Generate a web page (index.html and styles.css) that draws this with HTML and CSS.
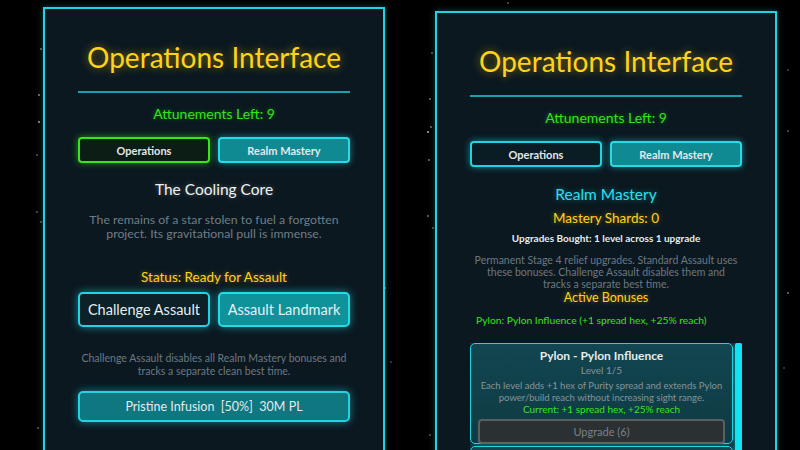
FILE: index.html
```html
<!DOCTYPE html>
<html lang="en">
<head>
    <meta charset="UTF-8">
    <meta name="viewport" content="width=device-width, initial-scale=1.0">
    <title>Operations Interface</title>
    <link rel="stylesheet" href="styles.css">
</head>
<body>
    <div class="stage">
        <!-- Operations tab -->
        <div class="panel panel-left">
            <h1 class="title">Operations Interface</h1>
            <hr class="divider">
            <p class="attune">Attunements Left: 9</p>
            <div class="tabs">
                <button class="tab tab-green">Operations</button>
                <button class="tab tab-teal">Realm Mastery</button>
            </div>
            <h2 class="zone-name">The Cooling Core</h2>
            <p class="desc">The remains of a star stolen to fuel a forgotten project. Its gravitational pull is immense.</p>
            <p class="status">Status: Ready for Assault</p>
            <div class="actions">
                <button class="big-btn big-btn-dark">Challenge Assault</button>
                <button class="big-btn big-btn-teal">Assault Landmark</button>
            </div>
            <p class="note">Challenge Assault disables all Realm Mastery bonuses and tracks a separate clean best time.</p>
            <button class="infuse-btn">Pristine Infusion&nbsp; [50%]&nbsp; 30M PL</button>
        </div>

        <!-- Realm Mastery tab -->
        <div class="panel panel-right">
            <h1 class="title">Operations Interface</h1>
            <hr class="divider">
            <p class="attune">Attunements Left: 9</p>
            <div class="tabs">
                <button class="tab tab-dark">Operations</button>
                <button class="tab tab-teal">Realm Mastery</button>
            </div>
            <h2 class="mastery-title">Realm Mastery</h2>
            <p class="shards">Mastery Shards: 0</p>
            <p class="bought">Upgrades Bought: 1 level across 1 upgrade</p>
            <p class="mastery-desc">Permanent Stage 4 relief upgrades. Standard Assault uses these bonuses. Challenge Assault disables them and tracks a separate best time.</p>
            <h3 class="bonus-head">Active Bonuses</h3>
            <p class="bonus-line">Pylon: Pylon Influence (+1 spread hex, +25% reach)</p>

            <div class="upgrade-wrap">
                <div class="upgrade-list">
                    <div class="upgrade-card">
                        <div class="card-title">Pylon - Pylon Influence</div>
                        <div class="card-level">Level 1/5</div>
                        <div class="card-desc">Each level adds +1 hex of Purity spread and extends Pylon power/build reach without increasing sight range.</div>
                        <div class="card-current">Current: +1 spread hex, +25% reach</div>
                        <button class="upgrade-btn">Upgrade (6)</button>
                    </div>
                    <div class="upgrade-card"></div>
                </div>
                <div class="scroll-thumb"></div>
            </div>
        </div>
    </div>
</body>
</html>
```

FILE: styles.css
```css
html, body {
    margin: 0;
    padding: 0;
    height: 100%;
    overflow: hidden;
}
body {
    font-family: Lato, "Noto Sans", sans-serif;
    background-color: #000;
    /* star field */
    background-image:
        radial-gradient(circle at 41px 49px, #555 0.8px, transparent 1.3px),
        radial-gradient(circle at 39px 95px, #666 0.8px, transparent 1.3px),
        radial-gradient(circle at 39px 122px, #777 0.8px, transparent 1.3px),
        radial-gradient(circle at 37px 155px, #444 0.7px, transparent 1.2px),
        radial-gradient(circle at 37px 212px, #444 0.7px, transparent 1.2px),
        radial-gradient(circle at 41px 222px, #444 0.7px, transparent 1.2px),
        radial-gradient(circle at 38px 428px, #444 0.7px, transparent 1.2px),
        radial-gradient(circle at 432px 53px, #444 0.7px, transparent 1.2px),
        radial-gradient(circle at 430px 99px, #555 0.8px, transparent 1.3px),
        radial-gradient(circle at 431px 127px, #555 0.8px, transparent 1.3px),
        radial-gradient(circle at 428px 132px, #888 0.8px, transparent 1.3px),
        radial-gradient(circle at 429px 160px, #555 0.8px, transparent 1.3px),
        radial-gradient(circle at 428px 216px, #555 0.8px, transparent 1.3px),
        radial-gradient(circle at 433px 228px, #444 0.7px, transparent 1.2px),
        radial-gradient(circle at 385px 288px, #555 0.8px, transparent 1.3px),
        radial-gradient(circle at 391px 362px, #333 0.7px, transparent 1.2px),
        radial-gradient(circle at 430px 435px, #444 0.7px, transparent 1.2px),
        radial-gradient(circle at 788px 70px, #333 0.7px, transparent 1.2px),
        radial-gradient(circle at 788px 131px, #444 0.7px, transparent 1.2px),
        radial-gradient(circle at 788px 293px, #555 0.8px, transparent 1.3px),
        radial-gradient(circle at 784px 368px, #333 0.7px, transparent 1.2px),
        radial-gradient(circle at 508px 3px, #444 0.7px, transparent 1.2px);
    background-repeat: no-repeat;
}
.stage {
    display: flex;
    align-items: flex-start;
    gap: 50px;
    padding-left: 43px;
}
.panel {
    width: 272px;
    padding: 31px 33px 0;
    background: #0b1820;
    border: 2px solid #22d3e2;
    box-shadow: 0 0 6px rgba(34, 211, 226, 0.35);
    text-align: center;
    height: 460px;
}
.panel-left {
    margin-top: 7px;
}
.panel-right {
    margin-top: 11px;
}
button {
    font-family: inherit;
    cursor: pointer;
}
p, h1, h2, h3 {
    margin: 0;
}
.title {
    font-size: 28px;
    font-weight: 400;
    line-height: 34px;
    color: #ffd21c;
    text-shadow: 0 0 8px rgba(255, 200, 0, 0.55);
}
.divider {
    border: none;
    height: 2px;
    background: #1a9fae;
    margin: 17px 0 0;
}
.attune {
    margin-top: 12px;
    font-size: 14px;
    line-height: 18px;
    color: #35e21b;
    text-shadow: 0 0 5px rgba(53, 226, 27, 0.45);
}
.tabs {
    display: flex;
    gap: 8px;
    margin-top: 14px;
}
.tab {
    flex: 1;
    height: 26px;
    border-radius: 4px;
    font-size: 11px;
    font-weight: 700;
    color: #e2e8ea;
    padding: 0;
}
.tab-green {
    background: #0b1d15;
    border: 2px solid #3be21e;
    box-shadow: 0 0 7px rgba(59, 226, 30, 0.6);
}
.tab-dark {
    background: #0a1c24;
    border: 2px solid #22d3e2;
    box-shadow: 0 0 7px rgba(34, 211, 226, 0.6);
}
.tab-teal {
    background: #0f8a93;
    border: 2px solid #27dbe6;
    box-shadow: 0 0 7px rgba(34, 211, 226, 0.55);
}

/* Operations tab body */
.zone-name {
    margin-top: 16px;
    font-size: 15.5px;
    font-weight: 400;
    line-height: 20px;
    color: #eef2f3;
    text-shadow: 0 0 5px rgba(255, 255, 255, 0.3);
}
.desc {
    margin-top: 14px;
    font-size: 12.3px;
    line-height: 14px;
    color: #6f7d86;
}
.status {
    margin-top: 27px;
    font-size: 13.5px;
    line-height: 18px;
    color: #ffd21c;
    text-shadow: 0 0 5px rgba(255, 200, 0, 0.45);
}
.actions {
    display: flex;
    gap: 8px;
    margin-top: 6px;
}
.big-btn {
    flex: 1;
    height: 35px;
    padding: 0;
    border-radius: 5px;
    font-size: 14.5px;
    color: #e8eef0;
}
.big-btn-dark {
    background: #0c2128;
    border: 2px solid #22d3e2;
    box-shadow: 0 0 8px rgba(34, 211, 226, 0.6);
}
.big-btn-teal {
    background: #10929b;
    border: 2px solid #27dbe6;
    box-shadow: 0 0 8px rgba(34, 211, 226, 0.6);
}
.note {
    margin-top: 25px;
    font-size: 10.5px;
    line-height: 13px;
    color: #6c7881;
}
.infuse-btn {
    display: block;
    width: 100%;
    height: 31px;
    margin-top: 13px;
    padding: 0;
    border-radius: 5px;
    background: #0e7780;
    border: 2px solid #22d3e2;
    box-shadow: 0 0 8px rgba(34, 211, 226, 0.55);
    color: #e3eaec;
    font-size: 12.5px;
}

/* Realm Mastery tab body */
.mastery-title {
    margin-top: 17px;
    font-size: 15.5px;
    font-weight: 400;
    line-height: 20px;
    color: #2ae0ef;
    text-shadow: 0 0 6px rgba(34, 211, 226, 0.5);
}
.shards {
    margin-top: 5px;
    font-size: 13.5px;
    line-height: 18px;
    color: #ffd21c;
    text-shadow: 0 0 5px rgba(255, 200, 0, 0.45);
}
.bought {
    margin-top: 4px;
    font-size: 10px;
    font-weight: 700;
    line-height: 14px;
    color: #e6ecee;
}
.mastery-desc {
    margin-top: 9px;
    padding: 0 2px;
    font-size: 10.5px;
    line-height: 12px;
    color: #6c7881;
}
.bonus-head {
    font-size: 12.5px;
    font-weight: 400;
    line-height: 15px;
    color: #ffd21c;
    text-shadow: 0 0 5px rgba(255, 200, 0, 0.45);
}
.bonus-line {
    margin-top: 8px;
    padding-left: 6px;
    text-align: left;
    font-size: 10.3px;
    line-height: 14px;
    color: #3ae21e;
}
.upgrade-wrap {
    display: flex;
    gap: 2px;
    margin-top: 16px;
    height: 120px;
    overflow: hidden;
}
.upgrade-list {
    flex: 1;
    display: flex;
    flex-direction: column;
    gap: 2px;
}
.upgrade-card {
    flex-shrink: 0;
    height: 101px;
    box-sizing: border-box;
    padding: 4px 7px 0;
    border: 1px solid #22d3e2;
    border-radius: 5px;
    background: linear-gradient(180deg, #124650 0%, #0f3a43 100%);
    box-shadow: 0 0 6px rgba(34, 211, 226, 0.45);
}
.card-title {
    font-size: 12px;
    font-weight: 700;
    line-height: 15px;
    color: #e6ecee;
}
.card-level {
    font-size: 10px;
    line-height: 15px;
    color: #85939a;
}
.card-desc {
    margin-top: 2px;
    font-size: 9.5px;
    line-height: 12px;
    color: #85939a;
}
.card-current {
    font-size: 10px;
    line-height: 11px;
    color: #3ae21e;
}
.upgrade-btn {
    display: block;
    width: 100%;
    height: 25px;
    margin-top: 4px;
    padding: 0;
    border-radius: 4px;
    background: #2b3033;
    border: 2px solid #5a5f62;
    color: #7b8287;
    font-size: 11px;
}
.scroll-thumb {
    width: 7px;
    flex-shrink: 0;
    background: #10e4f4;
    border-radius: 2px 2px 0 0;
    box-shadow: 0 0 5px rgba(16, 228, 244, 0.6);
}
```
